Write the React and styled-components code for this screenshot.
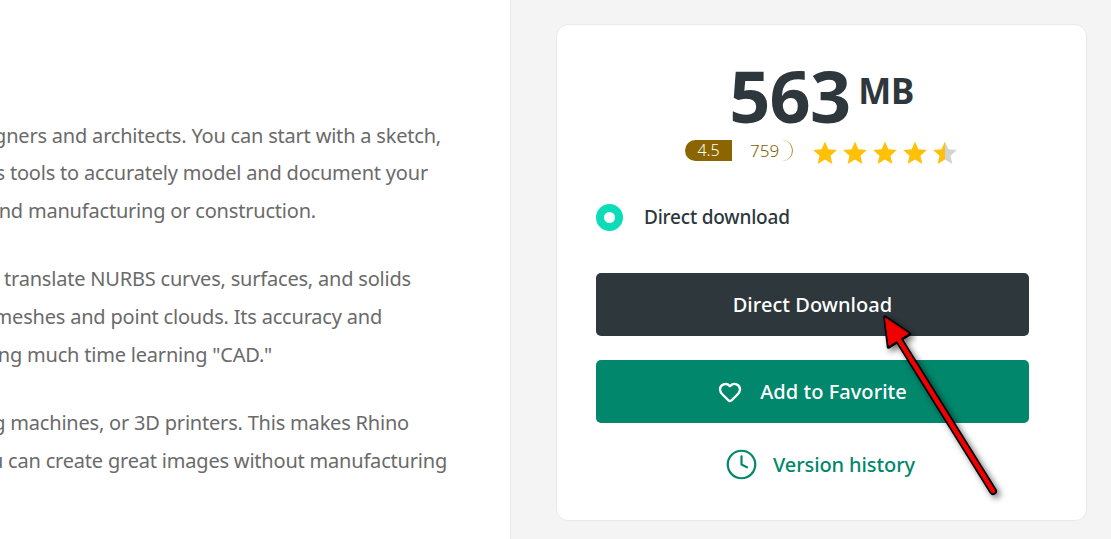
import React from "react";
import styled, { createGlobalStyle } from "styled-components";
import { Heart, Clock } from "lucide-react";

const paragraphs = [
  [
    { text: "Rhino is a 3D modeling tool for designers and architects. You can start with a sketch,", end: 441 },
    { text: "a drawing or a physical model, then use its tools to accurately model and document your", end: 428 },
    { text: "designs, ready for rendering, animation and manufacturing or construction.", end: 316 },
  ],
  [
    { text: "Rhino can create, edit, analyze, and translate NURBS curves, surfaces, and solids", end: 411 },
    { text: "with no limit on complexity, along with meshes and point clouds. Its accuracy and", end: 382 },
    { text: "flexibility let you work without spending much time learning \"CAD.\"", end: 272 },
  ],
  [
    { text: "It can drive laser cutters, milling machines, or 3D printers. This makes Rhino", end: 409 },
    { text: "a great choice for prototypes, and you can create great images without manufacturing", end: 447 },
  ],
];

const GlobalStyle = createGlobalStyle`
  html, body {
    margin: 0;
    height: 539px;
    overflow: hidden;
    background: #fff;
    font-family: "Noto Sans", "Open Sans", sans-serif;
  }
`;

const Page = styled.div`
  position: relative;
  display: flex;
  width: 1111px;
  height: 539px;
  overflow: hidden;
`;

const Article = styled.div`
  width: 510px;
  flex-shrink: 0;
  padding-top: 116.8px;
  box-sizing: border-box;
  overflow: hidden;
`;

const Paragraph = styled.div`
  margin-bottom: 30.5px;
`;

const Line = styled.div`
  display: flex;
  justify-content: flex-end;
  width: ${(props) => props.$end}px;
  height: 37.7px;
  line-height: 37.7px;
  font-size: 20px;
  letter-spacing: -0.2px;
  color: #6a6a6a;
  white-space: nowrap;
`;

const Sidebar = styled.div`
  flex: 1;
  background: #f4f4f4;
  border-left: 1px solid #e9e9e9;
  padding: 24px 24px 18px 45px;
  box-sizing: border-box;
`;

const Card = styled.div`
  display: flex;
  flex-direction: column;
  height: 497px;
  box-sizing: border-box;
  padding: 0 57px 0 39px;
  background: #fff;
  border: 1px solid #e9e9e9;
  border-radius: 12px;
`;

const Size = styled.div`
  display: flex;
  justify-content: center;
  color: #2d373c;
  font-weight: 700;
  height: 90px;
  margin-top: 25px;
  padding-left: 18px;
`;

const SizeNumber = styled.span`
  font-size: 72px;
  line-height: 90px;
  letter-spacing: -0.8px;
`;

const SizeUnit = styled.span`
  font-size: 35px;
  line-height: 82px;
  margin-left: 8px;
  letter-spacing: -0.4px;
`;

const RatingRow = styled.div`
  display: flex;
  align-items: center;
  height: 21px;
`;

const Score = styled.div`
  width: 47px;
  height: 21px;
  margin-left: 89px;
  background: #8a6500;
  border-radius: 11px 0 0 11px;
  color: #fff;
  font-size: 16px;
  line-height: 21px;
  font-weight: 300;
  text-align: center;
`;

const Count = styled.div`
  width: 43px;
  height: 21px;
  margin-left: 18px;
  box-sizing: border-box;
  border-right: 1px solid #b08a2e;
  border-radius: 0 11px 11px 0;
  color: #7f5c00;
  font-size: 17px;
  line-height: 21px;
  font-weight: 300;
`;

const Stars = styled.div`
  display: flex;
  gap: 4px;
  margin-left: 19px;
  margin-top: 4px;
`;

const RadioRow = styled.div`
  display: flex;
  align-items: center;
  gap: 21px;
  margin-top: 43px;
`;

const Radio = styled.div`
  width: 27px;
  height: 27px;
  box-sizing: border-box;
  border: 8.5px solid #0cdcb8;
  border-radius: 50%;
  background: #fff;
`;

const RadioLabel = styled.span`
  font-size: 19px;
  font-weight: 500;
  line-height: 25px;
  letter-spacing: -0.2px;
  color: #2d373c;
`;

const Button = styled.div`
  display: flex;
  align-items: center;
  justify-content: center;
  gap: 18px;
  height: 63px;
  width: 433px;
  margin-top: ${(props) => props.$top}px;
  background: ${(props) => props.$bg};
  border-radius: 5px;
  color: #fff;
  font-size: 20px;
  font-weight: 500;
  letter-spacing: 0.05px;
`;

const History = styled.div`
  display: flex;
  align-items: center;
  justify-content: center;
  gap: 15px;
  width: 433px;
  box-sizing: border-box;
  padding-left: 15px;
  margin-top: 25px;
  color: #00876c;
  font-size: 20px;
  font-weight: 500;
  letter-spacing: -0.1px;
`;

const ArrowSvg = styled.svg`
  position: absolute;
  left: 870px;
  top: 305px;
  overflow: visible;
  pointer-events: none;
`;

const Star = ({ half }) => (
  <svg width="26" height="26" viewBox="0 0 26 26">
    <defs>
      <linearGradient id="halfStar">
        <stop offset="52%" stopColor="#ffc107" />
        <stop offset="52%" stopColor="#d3d3d3" />
      </linearGradient>
    </defs>
    <path
      d="M13 1.5l3.4 7.8 8.5.8-6.4 5.6 1.9 8.3L13 19.6 5.6 24l1.9-8.3L1.1 10.1l8.5-.8z"
      fill={half ? "url(#halfStar)" : "#ffc107"}
    />
  </svg>
);

// red pointer laid over the buttons
const Arrow = () => (
  <ArrowSvg width="140" height="200" viewBox="0 0 140 200">
    <defs>
      <filter id="arrowShadow" x="-30%" y="-30%" width="160%" height="160%">
        <feDropShadow dx="3" dy="3" stdDeviation="3" floodColor="#000" floodOpacity="0.55" />
      </filter>
    </defs>
    <g filter="url(#arrowShadow)" strokeLinejoin="round" strokeLinecap="round">
      <path d="M123 186L24 27" stroke="#000" strokeWidth="8" fill="none" />
      <path d="M15 12l3.5 30 21-13z" stroke="#000" strokeWidth="3.5" fill="#000" />
      <path d="M123 186L24 27" stroke="#f00000" strokeWidth="4.5" fill="none" />
      <path d="M15.5 13.5l3.5 27 19-12z" fill="#f00000" stroke="#f00000" strokeWidth="1" />
    </g>
  </ArrowSvg>
);

const App = () => {
  return (
    <Page>
      <GlobalStyle />
      <Article>
        {paragraphs.map((lines, i) => (
          <Paragraph key={i}>
            {lines.map((line) => (
              <Line key={line.end} $end={line.end}>
                {line.text}
              </Line>
            ))}
          </Paragraph>
        ))}
      </Article>
      <Sidebar>
        <Card>
          <Size>
            <SizeNumber>563</SizeNumber>
            <SizeUnit>MB</SizeUnit>
          </Size>
          <RatingRow>
            <Score>4.5</Score>
            <Count>759</Count>
            <Stars>
              <Star />
              <Star />
              <Star />
              <Star />
              <Star half />
            </Stars>
          </RatingRow>
          <RadioRow>
            <Radio />
            <RadioLabel>Direct download</RadioLabel>
          </RadioRow>
          <Button $top={42} $bg="#2d373c">
            Direct Download
          </Button>
          <Button $top={24} $bg="#00876c">
            <Heart size={24} strokeWidth={2.4} />
            Add to Favorite
          </Button>
          <History>
            <Clock size={33} strokeWidth={1.6} />
            Version history
          </History>
        </Card>
      </Sidebar>
      <Arrow />
    </Page>
  );
};

export default App;
